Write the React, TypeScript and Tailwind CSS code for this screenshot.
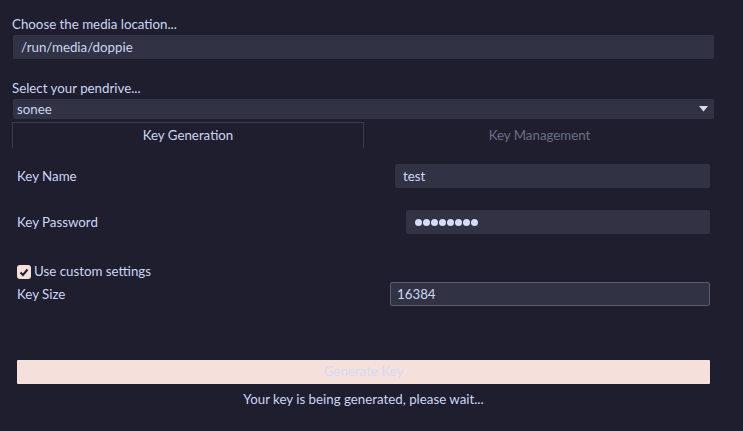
import React from "react";

export default function App() {
  return (
    <div
      className="w-[743px] h-[431px] bg-[#1e1e2e] text-[#cdd6f4] text-[13.3px] overflow-hidden flex flex-col"
      style={{ fontFamily: 'Lato, sans-serif' }}
    >
      <div className="pl-[12px] pt-[15px] h-[18px] leading-[18px] box-content">Choose the media location...</div>
      <div className="ml-[13px] mt-[2px] w-[701px] h-[24px] bg-[#313244] rounded-[2px] pl-[8px] leading-[24px]">
        /run/media/doppie
      </div>
      <div className="pl-[12px] mt-[20px] h-[18px] leading-[18px]">Select your pendrive...</div>
      <div className="ml-[13px] mt-[2px] w-[701px] h-[20px] bg-[#313244] rounded-[2px] pl-[4px] pr-[6px] leading-[20px] flex items-center justify-between">
        <span>sonee</span>
        <svg width="9" height="6" viewBox="0 0 9 6">
          <polygon points="0,0 9,0 4.5,5.5" fill="#d6dcf8" />
        </svg>
      </div>
      <div className="ml-[12px] mt-[3px] flex h-[26px]">
        <div className="w-[352px] border-l border-t border-r border-[#3a3b4e] flex items-center justify-center pt-[1px]">
          Key Generation
        </div>
        <div className="flex-1 flex items-center justify-center text-[#6c7086] pr-[28px] pt-[1px]">Key Management</div>
      </div>
      <div className="flex flex-col pl-[17px] pr-[33px]">
        <div className="mt-[16px] flex items-center justify-between h-[24px]">
          <span className="pt-[2px]">Key Name</span>
          <div className="w-[315px] h-[24px] bg-[#313244] rounded-[2px] pl-[8px] leading-[24px]">test</div>
        </div>
        <div className="mt-[22px] flex items-center justify-between h-[24px]">
          <span className="pt-[1px]">Key Password</span>
          <div className="w-[304px] h-[24px] bg-[#313244] rounded-[2px] pl-[9px] flex items-center gap-[1px]">
            {Array.from({ length: 8 }).map((_, i) => (
              <span key={i} className="w-[7px] h-[7px] rounded-full bg-[#d6dcf8] inline-block" />
            ))}
          </div>
        </div>
        <div className="mt-[30px] flex items-center h-[16px]">
          <div className="w-[14px] h-[14px] rounded-[3px] bg-[#f5e0dc] flex items-center justify-center">
            <svg width="10" height="9" viewBox="0 0 10 9">
              <polyline points="1.5,4.5 4,7 8.5,1.5" fill="none" stroke="#1e1e2e" strokeWidth="2" />
            </svg>
          </div>
          <span className="ml-[3px]">Use custom settings</span>
        </div>
        <div className="mt-[2px] flex items-center justify-between h-[24px]">
          <span className="pt-[2px]">Key Size</span>
          <div className="w-[320px] h-[24px] bg-[#313244] border border-[#585b70] rounded-[2px] pl-[6px] leading-[22px]">16384</div>
        </div>
        <div className="mt-[54px] h-[24px] bg-[#f5e0dc] rounded-[1px] flex items-center justify-center text-[#d3dcf7]">
          Generate Key
        </div>
        <div className="mt-[6px] h-[18px] leading-[18px] text-center">Your key is being generated, please wait...</div>
      </div>
    </div>
  );
}
